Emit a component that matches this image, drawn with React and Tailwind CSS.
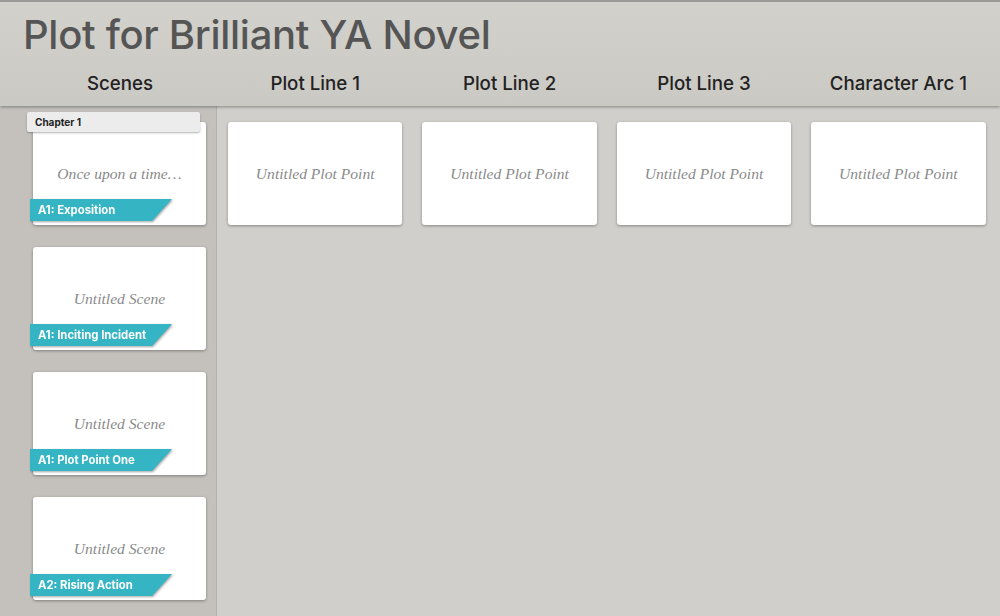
import React from "react";

const scenes = [
  { text: "Once upon a time…", tag: "A1: Exposition", chapter: "Chapter 1" },
  { text: "Untitled Scene", tag: "A1: Inciting Incident" },
  { text: "Untitled Scene", tag: "A1: Plot Point One" },
  { text: "Untitled Scene", tag: "A2: Rising Action" },
];

const lines = ["Plot Line 1", "Plot Line 2", "Plot Line 3", "Character Arc 1"];

const sans = { fontFamily: "Inter, 'Liberation Sans', sans-serif" };
const serif = { fontFamily: "'Liberation Serif', 'DejaVu Serif', serif" };

function SceneCard({ s }) {
  return (
    <div className="relative h-[103px]">
      <div className="h-full bg-white rounded-[3px] shadow-[0_1px_3px_rgba(0,0,0,0.35)] flex items-center justify-center">
        <span className="italic text-[15.6px] text-[#8a8a8a]" style={serif}>{s.text}</span>
      </div>
      {s.chapter && (
        <div
          className="absolute left-[-6px] top-[-10px] w-[173px] h-[20px] bg-[#ececec] rounded-[2px] shadow-[0_1px_2px_rgba(0,0,0,0.3)] flex items-center pl-[8px] text-[10px] font-bold text-[#222]"
          style={sans}
        >
          {s.chapter}
        </div>
      )}
      <div className="absolute left-[-3px] top-[77px] drop-shadow-[1px_1px_1px_rgba(0,0,0,0.35)]">
        <div
          className="w-[142px] h-[22px] bg-[#35b4c4] flex items-center pl-[8px] text-[11.3px] font-bold text-white [clip-path:polygon(0_0,100%_0,86%_100%,0_100%)]"
          style={sans}
        >
          {s.tag}
        </div>
      </div>
    </div>
  );
}

export default function App() {
  return (
    <div className="w-[1000px] h-[616px] overflow-hidden flex flex-col bg-[#d1cfcb]" style={sans}>
      <div className="relative z-10 h-[106px] shrink-0 border-t-2 border-[#9b9995] bg-gradient-to-b from-[#d3d1cc] to-[#cbc9c4] shadow-[0_1px_3px_rgba(0,0,0,0.35)] flex flex-col">
        <div className="h-[62px] pl-[23px] pt-[3px] flex items-center">
          <h1 className="text-[40px] leading-none text-[#555555] font-medium tracking-[-0.3px]" style={sans}>
            Plot for Brilliant YA Novel
          </h1>
        </div>
        <div className="flex h-[40px] items-center">
          <div className="w-[217px] pl-[33px] pr-[10px] text-center text-[18.7px] text-[#222] font-medium">Scenes</div>
          <div className="flex pl-[1px]">
            {lines.map((l) => (
              <div key={l} className="w-[194.4px] text-center text-[18.7px] text-[#222] font-medium">{l}</div>
            ))}
          </div>
        </div>
      </div>
      <div className="flex flex-1 min-h-0">
        <div className="w-[217px] shrink-0 bg-[#c4c1bc] border-r border-[#b5b2ad] pl-[33px] pr-[10px] pt-[16px] flex flex-col gap-[22px]">
          {scenes.map((s, i) => (
            <SceneCard key={i} s={s} />
          ))}
        </div>
        <div className="flex pl-[1px] pt-[16px] items-start">
          {lines.map((l) => (
            <div key={l} className="w-[194.4px] px-[10px]">
              <div className="h-[103px] bg-white rounded-[3px] shadow-[0_1px_3px_rgba(0,0,0,0.35)] flex items-center justify-center">
                <span className="italic text-[15.6px] text-[#8a8a8a]" style={serif}>Untitled Plot Point</span>
              </div>
            </div>
          ))}
        </div>
      </div>
    </div>
  );
}
